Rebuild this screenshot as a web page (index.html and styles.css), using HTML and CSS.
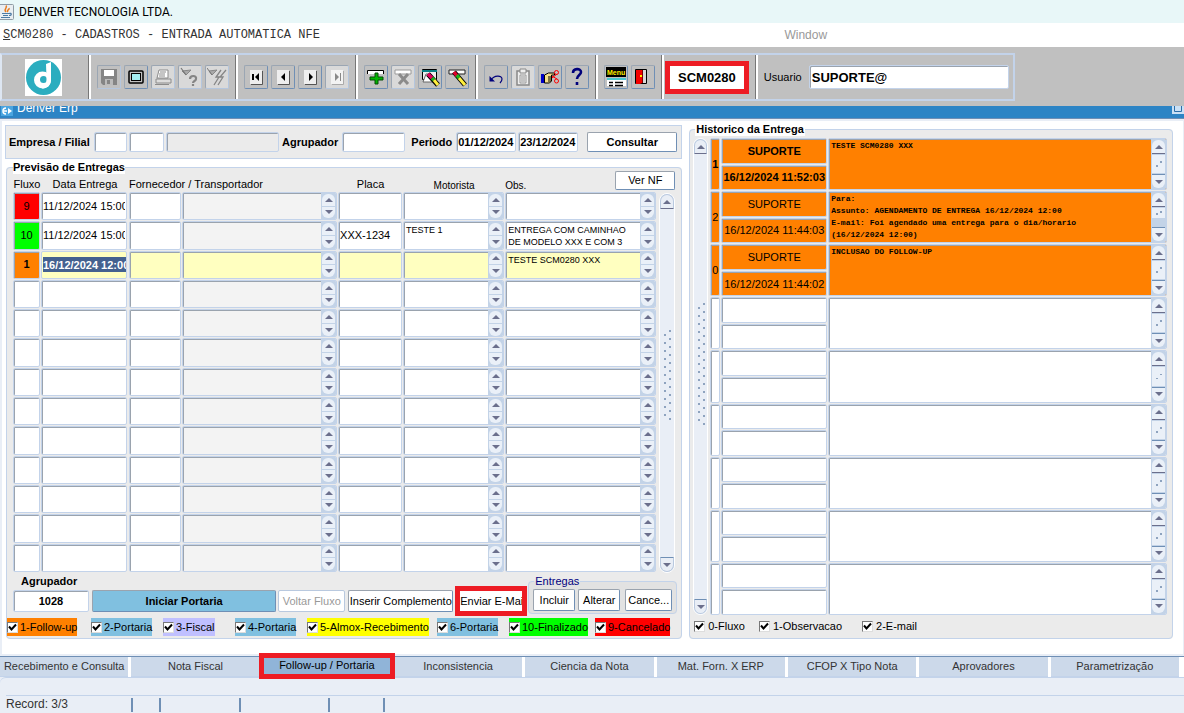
FILE: index.html
```
<!DOCTYPE html>
<html lang="pt-BR">
<head>
  <title>DENVER TECNOLOGIA LTDA.</title>
  <meta charset="UTF-8"/>
  <meta name="viewport" content="width=device-width,initial-scale=1"/>
  <link rel="stylesheet" href="styles.css">
</head>
<body>
<header class="app-title">
  <svg width="14" height="16" viewBox="0 0 14 16"><rect x="-2" y="0.5" width="15.5" height="15" rx="1" fill="#e9eef2" stroke="#8f9ba5"/><path d="M6 8C3 5 8 4 6 1.500M8 8c-2-2 2-2 1-4" fill="none" stroke="#e87c1e" stroke-width="1.500"/><path d="M2 9.500h7M3 11.500h5M1 13.500h9M9 9.500c3-1 3 2 0 2" fill="none" stroke="#4c7ba5" stroke-width="1.200"/></svg>
  <span>DENVER TECNOLOGIA LTDA.</span>
</header>
<nav class="menu">
  <a href="#" class="menu-program"><u>S</u>CM0280 - CADASTROS - ENTRADA AUTOMATICA NFE</a>
  <a href="#" class="menu-window">Window</a>
</nav>

<div class="toolbar-area">
  <div class="toolbar">
    <div class="tool-group logo">
      <svg width="37" height="37" viewBox="0 0 37 37"><path fill="#fff" d="M0 0h37v37H0z"/><circle cx="18.500" cy="18.500" r="17.500" fill="#2badbf"/><circle cx="17.500" cy="21" r="8.500" fill="#fff"/><circle cx="18.500" cy="20.500" r="3.500" fill="#2badbf"/><path d="M21 5l5-2v17c0 7-4 9.500-9 9.500l3-5c1.500-1 1.500-2 1.500-5z" fill="#fff"/></svg>
    </div>
    <div class="tool-group">
      <button type="button" class="tool off" aria-label="Salvar"><svg viewBox="0 0 20 20"><path fill="#858585" d="M2 2h16v16H4l-2-2z"/><path fill="#fff" d="M5 3h10v6H5z"/><path fill="#bbb" d="M6 12h8v6H6z"/><path fill="#858585" d="M8 13h3v4H8z"/></svg></button>
      <button type="button" class="tool" aria-label="Tela"><svg viewBox="0 0 20 20"><rect x="3" y="4" width="14" height="12" rx="1" fill="#c0c0c0" stroke="#000" stroke-width="1.500"/><rect x="5.500" y="6.500" width="9" height="7" fill="#a5eef2" stroke="#000"/></svg></button>
      <button type="button" class="tool off pale" aria-label="Imprimir"><svg viewBox="0 0 20 20"><path d="M6 3h9v8H4z" fill="#fff" stroke="#8b8b8b"/><path d="M7 5h6M6 7h6M6 9h6" stroke="#8b8b8b"/><path d="M3 12h15v4H3z" fill="#ddd" stroke="#8b8b8b"/><path d="M2 17.500h14" stroke="#8b8b8b"/></svg></button>
      <button type="button" class="tool off pale" aria-label="Entrar consulta"><svg viewBox="0 0 20 20"><path d="M2 4l9-1-5 5z" fill="#aaa" stroke="#888"/><path d="M1 1l5 7" stroke="#777" stroke-width="1.200"/><path d="M10 12c0-4 7-4 6 0 0 2-3 2-3 4M13 17v2" fill="none" stroke="#858585" stroke-width="2.200"/></svg></button>
      <button type="button" class="tool off pale" aria-label="Executar consulta"><svg viewBox="0 0 20 20"><path d="M2 4l8-1-5 5z" fill="#aaa" stroke="#888"/><path d="M0 1l5 7" stroke="#777"/><path d="M14 3L9 10h3l-5 8M19 3l-6 7h3l-5 8" fill="none" stroke="#858585" stroke-width="1.300"/></svg></button>
    </div>
    <div class="tool-group">
      <button type="button" class="tool" aria-label="Primeiro"><svg viewBox="0 0 20 20"><path fill="#eee" d="M4 3h12v14H4z"/><path d="M16.500 4v13.500H5" fill="none" stroke="#555"/><path d="M6 7h2v6H6zM13 6v8l-4-4z"/></svg></button>
      <button type="button" class="tool" aria-label="Anterior"><svg viewBox="0 0 20 20"><path fill="#eee" d="M4 3h12v14H4z"/><path d="M16.500 4v13.500H5" fill="none" stroke="#555"/><path d="M12 6v8l-4-4z"/></svg></button>
      <button type="button" class="tool" aria-label="Proximo"><svg viewBox="0 0 20 20"><path fill="#eee" d="M4 3h12v14H4z"/><path d="M16.500 4v13.500H5" fill="none" stroke="#555"/><path d="M9 6v8l4-4z"/></svg></button>
      <button type="button" class="tool off pale" aria-label="Ultimo"><svg viewBox="0 0 20 20"><path fill="#f3f3f3" d="M4 3h12v14H4z"/><path d="M16.500 4v13.500H5" fill="none" stroke="#aaa"/><path fill="#888" d="M8 6v8l4-4zM13 6h1v8h-1z"/></svg></button>
    </div>
    <div class="tool-group">
      <button type="button" class="tool" aria-label="Inserir"><svg viewBox="0 0 20 20"><path d="M2 3h15v4H2z" fill="#fff"/><path d="M1.500 7V3.500h16V7" fill="none" stroke="#000"/><path d="M9 6h3v4h5v3h-5v4H9v-4H4v-3h5z" fill="#00b400" stroke="#064d06"/></svg></button>
      <button type="button" class="tool off pale" aria-label="Remover"><svg viewBox="0 0 20 20"><path d="M2 3h16v4H2z" fill="#fff" stroke="#999"/><path d="M6 7l9 10M15 7L6 17" stroke="#8b8b8b" stroke-width="3"/></svg></button>
      <button type="button" class="tool" aria-label="Limpar bloco"><svg viewBox="0 0 20 20"><path d="M2.500 2.500h14v10h-14z" fill="#eee" stroke="#000"/><path d="M2 4h15" stroke="#087f85" stroke-width="2"/><path d="M3 15l3-8h5l5 8z" fill="#fff" stroke="#666"/><path d="M8 7l10 11" stroke="#000" stroke-width="5"/><path d="M8 7l4 4" stroke="#e3005b" stroke-width="3.500"/><path d="M12 11l2 2" stroke="#19b41b" stroke-width="3.500"/><path d="M14 13l4 5" stroke="#ffef3d" stroke-width="3"/></svg></button>
      <button type="button" class="tool" aria-label="Limpar registro"><svg viewBox="0 0 20 20"><path d="M2 3h16v4H2z" fill="#fff" stroke="#222"/><path d="M7 5l11 13" stroke="#000" stroke-width="5"/><path d="M7 5l3 4" stroke="#e3002b" stroke-width="3.500"/><path d="M10 8l2 3" stroke="#19b41b" stroke-width="3.500"/><path d="M12 11l6 7" stroke="#ffef3d" stroke-width="3"/></svg></button>
    </div>
    <div class="tool-group">
      <button type="button" class="tool" aria-label="Desfazer"><svg viewBox="0 0 20 20"><path d="M5 13c3-5 11-5 11-1 0 2-1 3-2 4" fill="none" stroke="#00007b" stroke-width="1.200"/><path d="M3.500 9v5.500H9z" fill="#00007b"/></svg></button>
      <button type="button" class="tool off pale" aria-label="Colar"><svg viewBox="0 0 20 20"><path d="M4 4h12v14H4z" fill="#eee" stroke="#888" stroke-width="1.500"/><path d="M7 2h6v4H7z" fill="#eee" stroke="#888"/><path d="M7 8h6v8H7zM8 10h4M8 12h4M8 14h4" fill="none" stroke="#999"/></svg></button>
      <button type="button" class="tool" aria-label="Editar"><svg viewBox="0 0 20 20"><path d="M1 7h3v9H1z" fill="#0000c6"/><path d="M4.500 8l4-2h6v2h-3v6l-2 2h-5z" fill="#f7e08a" stroke="#000"/><path d="M8 10h4M8 12h4M8 14h3" stroke="#000"/><circle cx="16.500" cy="5.500" r="2" fill="none" stroke="#f00"/><circle cx="16.500" cy="14" r="2" fill="none" stroke="#f00"/><path d="M12 9l5 3M12 11l5-4" stroke="#f00"/></svg></button>
      <button type="button" class="tool" aria-label="Ajuda"><svg viewBox="0 0 20 20"><path d="M6 6c0-5 8-5 8-1 0 3-4 3-4 7M10 15v3" fill="none" stroke="#00007b" stroke-width="2.600"/></svg></button>
    </div>
    <div class="tool-group">
      <button type="button" class="tool" aria-label="Menu"><svg viewBox="0 0 20 20"><path fill="#000" d="M0 0h20v10H0z"/><text x="1" y="8" class="menu-glyph">Menu</text><path fill="#fff" d="M1 11h19v8H1z"/><path fill="#49c8d0" d="M1 11h19v2H1z"/><path d="M3 15.500h4M9 15.500h8M3 18.500h4M9 18.500h8" stroke="#000" stroke-width="1.500"/></svg></button>
      <button type="button" class="tool" aria-label="Sair"><svg viewBox="0 0 20 20"><path d="M2.500 2.500h11v14h-11z" fill="#d8d8d8" stroke="#000"/><path d="M8 3h2v13H8z" fill="#780000"/><path d="M3 3h6v13l-2 1H3z" fill="#f20000"/><path fill="#ffef00" d="M7 8h2v2H7z"/></svg></button>
    </div>
    <div class="tool-group program">
      <output class="program-code">SCM0280</output>
    </div>
    <div class="tool-group user">
      <label for="usuario">Usuario</label>
      <input id="usuario" class="user-input" type="text" value="SUPORTE@">
    </div>
  </div>
</div>

<div class="window-title">
  <svg width="12" height="10" viewBox="0 0 12 10"><path fill="#4ba5e0" d="M0 0h12v10H0z"/><path d="M5 2a3 3 0 1 0 0 6M3 5h3" fill="none" stroke="#fff" stroke-width="1.500"/><path d="M7 2l4 3-4 3z" fill="#fff"/></svg>
  <span class="window-name">Denver Erp</span>
  <svg class="restore" width="12" height="8" viewBox="0 0 12 8"><path fill="#c9e0f5" d="M0 0h12v8H0z"/><path d="M2.500-1v6.500h7V-1" fill="none" stroke="#2b6ea8"/></svg>
</div>

<main class="content">
  <section class="left">
    <form class="filter">
      <label for="empresa">Empresa / Filial</label>
      <input id="empresa" class="field w-emp" type="text">
      <input class="field w-fil" type="text" aria-label="Filial">
      <input class="field w-name" type="text" aria-label="Nome da filial" readonly>
      <label for="agrupador">Agrupador</label>
      <input id="agrupador" class="field w-agr" type="text">
      <label for="periodo" class="period">Periodo</label>
      <input id="periodo" class="field w-date" type="text" value="01/12/2024">
      <input class="field w-date" type="text" aria-label="Periodo final" value="23/12/2024">
      <button type="button" class="btn consult">Consultar</button>
    </form>

    <fieldset class="panel">
      <legend>Previsão de Entregas</legend>
      <div class="deliveries-area">
        <table class="deliveries">
          <colgroup>
            <col class="c-flow"><col class="c-date"><col class="c-sup"><col class="c-carrier"><col class="c-plate"><col class="c-driver"><col class="c-obs">
          </colgroup>
          <thead>
            <tr>
              <th>Fluxo</th>
              <th>Data Entrega</th>
              <th colspan="2" class="start">Fornecedor / Transportador</th>
              <th>Placa</th>
              <th class="small">Motorista</th>
              <th class="small start">Obs.</th>
            </tr>
          </thead>
          <tbody id="deliveries"></tbody>
        </table>
        <button type="button" class="btn ver-nf">Ver NF</button>
        <div class="scroll">
          <button type="button" class="arrow up" aria-label="Subir"></button>
          <span class="grip"></span>
          <button type="button" class="arrow down" aria-label="Descer"></button>
        </div>
      </div>

      <div class="actions">
        <div class="group-id">
          <label for="grupo">Agrupador</label>
          <input id="grupo" class="field" type="text" value="1028">
        </div>
        <button type="button" class="btn start-btn">Iniciar Portaria</button>
        <button type="button" class="btn back-btn" disabled>Voltar Fluxo</button>
        <button type="button" class="btn insert-btn">Inserir Complemento</button>
        <button type="button" class="btn mail-btn">Enviar E-Mai</button>
        <fieldset class="entregas">
          <legend>Entregas</legend>
          <button type="button" class="btn">Incluir</button>
          <button type="button" class="btn">Alterar</button>
          <button type="button" class="btn cancel">Cance...</button>
        </fieldset>
      </div>

      <div class="flows">
        <label class="orange"><input type="checkbox" checked>1-Follow-up</label>
        <label class="blue"><input type="checkbox" checked>2-Portaria</label>
        <label class="lilac"><input type="checkbox" checked>3-Fiscal</label>
        <label class="blue"><input type="checkbox" checked>4-Portaria</label>
        <label class="yellow"><input type="checkbox" checked>5-Almox-Recebimento</label>
        <label class="blue"><input type="checkbox" checked>6-Portaria</label>
        <label class="green"><input type="checkbox" checked>10-Finalizado</label>
        <label class="red"><input type="checkbox" checked>9-Cancelado</label>
      </div>
    </fieldset>
  </section>

  <fieldset class="panel history">
    <legend>Historico da Entrega</legend>
    <div class="history-area">
      <div class="scroll">
        <button type="button" class="arrow up" aria-label="Subir"></button>
        <span class="grip tall"></span>
        <button type="button" class="arrow down" aria-label="Descer"></button>
      </div>
      <div id="history" class="history-list"></div>
    </div>
    <div class="kinds">
      <label><input type="checkbox" checked>0-Fluxo</label>
      <label><input type="checkbox" checked>1-Observacao</label>
      <label><input type="checkbox" checked>2-E-mail</label>
    </div>
  </fieldset>
</main>

<nav class="tabs">
  <button type="button">Recebimento e Consulta</button>
  <button type="button">Nota Fiscal</button>
  <button type="button" class="active">Follow-up / Portaria</button>
  <button type="button">Inconsistencia</button>
  <button type="button">Ciencia da Nota</button>
  <button type="button">Mat. Forn. X ERP</button>
  <button type="button">CFOP X Tipo Nota</button>
  <button type="button">Aprovadores</button>
  <button type="button">Parametrização</button>
</nav>

<footer class="status">
  <div class="status-message"></div>
  <div class="status-line">
    <span class="record">Record: 3/3</span>
    <span class="s1"></span>
    <span class="s2"></span>
    <span class="s3"></span>
    <span class="s4"></span>
  </div>
</footer>

<script src="app.js"></script>
</body>
</html>
```
FILE: styles.css
```
* {
  box-sizing: border-box;
}

body {
  display: flex;
  flex-direction: column;
  min-height: 100vh;
  margin: 0;
  font: 11px/13px "Liberation Sans", Arial, sans-serif;
  color: #000;
  background: #e9eef6;
}

button, input, textarea {
  margin: 0;
  font: inherit;
  color: inherit;
}

/* title and menu */
.app-title {
  display: flex;
  align-items: center;
  gap: 5px;
  height: 23px;
  font: 12px/16px Roboto, sans-serif;
  background: #e8f7f8;
}

.menu {
  display: flex;
  align-items: center;
  height: 24px;
  padding-left: 3px;
  background: #fff;
}

.menu a {
  color: #333;
  text-decoration: none;
}

.menu-program {
  flex: 0 0 66%;
  font: 12px/14px "Liberation Mono", monospace;
}

.menu .menu-window {
  padding-left: 2px;
  font-size: 12px;
  color: #999;
}

/* toolbar */
.toolbar-area {
  height: 59px;
  padding-top: 6px;
  background: #c0c0c0;
}

.toolbar {
  display: flex;
  width: max-content;
  height: 48px;
  border: 2px solid #c3d3ea;
  border-left-color: #dde6f2;
}

.tool-group {
  display: flex;
  align-items: center;
  gap: 3px;
  padding: 0 6px;
  border-left: 2px solid #fff;
  border-right: 1px solid #777;
}

.logo {
  padding: 0 26px 0 23px;
  border-left: 0;
}

.tool {
  width: 24px;
  height: 24px;
  padding: 1px;
  background: #c0c0c0;
  border: 1px solid #9ba6b3;
  border-right-color: #6f8fb5;
  border-bottom-color: #6f8fb5;
  border-radius: 2px;
}

.tool.off {
  border-right-color: #b4c6de;
  border-bottom-color: #b4c6de;
}

.tool.pale {
  background: #d9d9d9;
}

.tool svg {
  display: block;
  width: 20px;
  height: 20px;
}

.menu-glyph {
  font: bold 7px "Liberation Sans", sans-serif;
  fill: #ffef00;
}

.program {
  padding: 0 6px 0 1px;
}

.program-code {
  padding: 5px 8px;
  font-size: 13px;
  font-weight: bold;
  background: #fff;
  border: 5px solid #ed1c24;
}

.user {
  gap: 7px;
  padding: 0 4px 0 6px;
  border-right: 0;
}

.user-input {
  width: 200px;
  height: 24px;
  padding: 0 2px;
  font-size: 13px;
  font-weight: bold;
  background: #fff;
  border: 1px solid #c3d3ea;
  border-radius: 2px;
  box-shadow: inset 1px 1px #9aa3ae;
}

.window-title {
  display: flex;
  align-items: flex-start;
  gap: 4px;
  height: 13px;
  padding-left: 1px;
  overflow: hidden;
  color: #fff;
  background: #2c84c5;
  border-bottom: 1px solid #6f8fb5;
}

.window-name {
  margin-top: -4px;
  font-size: 12px;
}

.restore {
  margin-left: auto;
}

/* content */
.content {
  display: grid;
  flex: 1;
  grid-template-columns: 7fr 5fr;
  gap: 7px;
  padding: 2px 10px 15px 3px;
  background: #fff;
  border: 2px solid #e9eef6;
  border-right-width: 1px;
}

.left {
  display: flex;
  flex-direction: column;
  gap: 2px;
  min-width: 0;
  padding-top: 2px;
}

.filter {
  display: flex;
  align-items: center;
  gap: 2px;
  height: 34px;
  padding: 0 4px 0 2px;
  font-weight: bold;
  background: #ebebeb;
  border: 1px solid #c3d3ea;
}

.filter label {
  flex: none;
  padding: 0 2px 0 1px;
}

.filter .period {
  padding-left: 4px;
}

.field {
  min-width: 0;
  height: 20px;
  padding: 0 1px;
  font-weight: bold;
  background: #fff;
  border: 1px solid #c3d3ea;
  border-radius: 2px;
  box-shadow: inset 1px 1px #9aa3ae;
}

.field:read-only {
  background: #ebebeb;
}

.w-emp {
  width: 33px;
}

.w-fil {
  width: 35px;
}

.w-name {
  flex: 1;
}

.w-agr {
  width: 63px;
}

.w-date {
  width: 60px;
}

.btn {
  height: 22px;
  padding: 0;
  white-space: nowrap;
  background: #fff;
  border: 1px solid #9aa3ae;
  border-right-color: #6f8fb5;
  border-bottom-color: #6f8fb5;
  border-radius: 2px;
}

.consult {
  width: 90px;
  height: 20px;
  margin-left: 7px;
  font-weight: bold;
}

.panel {
  display: flex;
  flex: 1;
  flex-direction: column;
  min-width: 0;
  margin: 0 0 0 1px;
  padding: 0;
  background: #ebebeb;
  border: 1px solid #c3d3ea;
  border-radius: 4px;
}

.panel > legend {
  margin-left: 6px;
  padding: 0;
  font-weight: bold;
  background: #fff;
}

.deliveries-area {
  display: grid;
  grid-template-columns: 1fr 16px;
  grid-template-rows: 19px 1fr;
  column-gap: 2px;
  padding: 0 6px;
}

.deliveries {
  grid-area: 1 / 1 / 3 / 2;
  width: 100%;
  height: 396px;
  margin-top: 3px;
  table-layout: fixed;
  border-collapse: collapse;
}

.c-flow {
  width: 28px;
}

.c-date {
  width: 88px;
}

.c-sup {
  width: 53px;
}

.c-carrier {
  width: 156px;
}

.c-plate {
  width: 65px;
}

.c-driver {
  width: 102px;
}

.c-obs {
  width: 152px;
}

.deliveries th {
  height: 15px;
  padding: 0;
  font-weight: normal;
  white-space: nowrap;
}

.deliveries .start {
  text-align: left;
}

.deliveries .small {
  padding-top: 2px;
  font-size: 10px;
}

.deliveries td {
  height: 29px;
  padding: 0 1px 1px 0;
}

.deliveries td:nth-child(2) {
  padding-right: 2px;
}

.ver-nf {
  grid-area: 1 / 1 / 2 / 3;
  justify-self: end;
  width: 60px;
  height: 19px;
  margin-top: -3px;
}

.deliveries-area .scroll {
  grid-area: 2 / 2;
}

/* record cells */
.cell {
  display: flex;
  width: 100%;
  height: 100%;
  overflow: hidden;
  background: #fff;
  border: 1px solid #c3d3ea;
  border-radius: 2px;
}

.cell input, .cell textarea {
  flex: 1;
  width: 100%;
  min-width: 0;
  padding: 0 1px;
  resize: none;
  overflow: hidden;
  background: transparent;
  border: 0;
  outline: 0;
  box-shadow: inset 1px 1px #9aa3ae;
}

.cell textarea {
  padding: 2px 0 0 2px;
  font-size: 9px;
  line-height: 12px;
}

.cell.center input {
  padding: 0;
  text-align: center;
}

.cell.readonly {
  background: #f3f3f3;
}

.current .cell {
  background: #ffffc0;
}

.cell.red, .red {
  background: #f00;
}

.cell.green, .green {
  background: #0f0;
}

.cell.orange, .current .cell.orange, .orange {
  background: #ff8000;
}

.current .center, .current .date {
  font-weight: bold;
}

.current .date input {
  height: 15px;
  margin: auto 0 auto 1px;
  padding: 0;
  color: #fff;
  background: #44618f;
  box-shadow: none;
}

.spin {
  display: flex;
  flex: none;
  flex-direction: column;
  gap: 1px;
  width: 15px;
  padding: 1px;
  background: #c3d3e7;
}

.spin button {
  display: grid;
  flex: 1;
  place-items: center;
  padding: 0;
  background: #eaf0f8;
  border: 0;
  border-radius: 6px 6px 0 0;
}

.spin button:last-child {
  border-radius: 0 0 6px 6px;
}

.spin button::before, .arrow::before {
  content: "";
  border: 4px solid transparent;
  border-top: 0;
  border-bottom: 4px solid #6b6f8c;
}

.spin button:last-child::before, .arrow.down::before {
  border-top: 4px solid #6b6f8c;
  border-bottom: 0;
}

/* scrollbars */
.scroll {
  display: flex;
  flex-direction: column;
  align-items: center;
  background: #e9eef6;
  border: 1px solid #fff;
  border-radius: 8px;
}

.arrow {
  display: grid;
  place-items: center;
  width: 100%;
  height: 15px;
  padding: 0;
  background: #e9eef6;
  border: 1px solid #b9c9df;
  border-bottom-color: #6b6f8c;
  border-radius: 7px 7px 0 0;
}

.arrow.down {
  border-color: #b9c9df;
  border-top-color: #6f8fb5;
  border-radius: 0 0 7px 7px;
}

.grip {
  width: 8px;
  height: 92px;
  margin: 120px auto auto;
  background:
    radial-gradient(circle at 2px 6px, #8ea3bf 1px, transparent 1px) 0 0 / 8px 8px,
    radial-gradient(circle at 7px 2px, #8ea3bf 1px, transparent 1px) 0 0 / 8px 8px;
}

.grip.tall {
  height: 124px;
  margin-top: 148px;
}

/* actions */
.actions {
  display: flex;
  align-items: flex-end;
  height: 41px;
  padding: 0 4px 0 6px;
}

.actions .btn {
  flex: none;
  margin-bottom: 2px;
}

.group-id {
  display: flex;
  flex-direction: column;
  gap: 2px;
  width: 76px;
  margin: 0 3px 2px 0;
  font-weight: bold;
}

.group-id label {
  padding-left: 8px;
}

.group-id .field {
  height: 22px;
  text-align: center;
}

.actions .start-btn {
  flex: 1;
  margin-right: 2px;
  font-weight: bold;
  background: #80c0e0;
}

.back-btn {
  width: 67px;
  color: #999;
  border-color: #b9c9df;
}

.insert-btn {
  width: 105px;
  margin-left: 3px;
}

.actions .mail-btn {
  width: 62px;
  height: 20px;
  margin: 0 6px 3px 7px;
  border: 0;
  border-radius: 0;
  outline: 5px solid #ed1c24;
}

.entregas {
  display: flex;
  gap: 3px;
  width: 149px;
  min-width: 0;
  margin: 0;
  padding: 0 4px;
  background: #e2e2e2;
  border: 1px solid #c3d3ea;
  border-radius: 4px;
}

.entregas legend {
  margin-left: 1px;
  padding: 0 1px;
  color: #000080;
}

.entregas .btn {
  flex: 1;
  margin-top: 1px;
}

.entregas .cancel {
  flex: 0 0 47px;
  margin-left: 2px;
}

/* checkboxes */
.flows {
  display: grid;
  grid-template-columns: 84px 72px 72px 72px 130px 72px 86px 1fr;
  justify-items: start;
  padding: 4px 0 2px;
}

.flows label, .kinds label {
  display: flex;
  align-items: center;
  gap: 3px;
  height: 18px;
  white-space: nowrap;
}

.flows label {
  gap: 2px;
}

.blue {
  background: #80c0e0;
}

.lilac {
  background: #c0c0ff;
}

.yellow {
  background: #ff0;
}

input[type="checkbox"] {
  width: 11px;
  height: 11px;
  appearance: none;
  background: #fff url("data:image/svg+xml,%3Csvg xmlns='http://www.w3.org/2000/svg' viewBox='0 0 9 9'%3E%3Cpath d='M1 3.500l2.500 3L8 1.500' fill='none' stroke='%23000' stroke-width='2'/%3E%3C/svg%3E") center / 9px 9px no-repeat;
  border: 1px solid #777;
  border-right-color: #ddd;
  border-bottom-color: #ddd;
}

/* history */
.history > legend {
  margin-left: 5px;
  padding: 0 1px;
}

.history {
  margin-left: 0;
}

.history-area {
  display: flex;
  flex: 1;
  gap: 2px;
  padding: 2px 5px 0 3px;
}

.history-area .scroll {
  flex: 0 0 15px;
}

.history-list {
  display: flex;
  flex: 1;
  flex-direction: column;
  gap: 1px;
  min-width: 0;
}

.record-row {
  display: grid;
  flex: 1;
  grid-template-rows: 1fr 1fr;
  grid-template-columns: 10px 106px 1fr;
  gap: 1px;
  min-height: 0;
}

.record-row .seq {
  grid-row: 1 / 3;
}

.record-row .note {
  grid-area: 1 / 3 / 3 / 4;
}

.record-row .note textarea {
  height: 100%;
  padding: 1px 0 0 2px;
  font: bold 8px/12px "Liberation Mono", monospace;
}

.record-row.latest .center {
  font-weight: bold;
}

.record-row .cell input {
  height: 100%;
}

.spin.long button {
  flex: 0 0 14px;
  border-bottom: 1px solid #6b6f8c;
}

.spin.long button:last-child {
  margin-top: auto;
  border-top: 1px solid #6f8fb5;
  border-bottom: 0;
}

.thumb {
  flex: 1;
  background:
    radial-gradient(circle at 5px 60%, #8ea3bf 1px, transparent 1px),
    radial-gradient(circle at 9px 40%, #8ea3bf 1px, transparent 1px),
    #eaf0f8;
}

.thumb.short {
  flex: 0 0 10px;
}

.kinds {
  display: flex;
  gap: 14px;
  padding: 2px 4px 3px;
}

.kinds label:last-child {
  margin-left: 6px;
}

/* tabs */
.tabs {
  display: flex;
  gap: 3px;
  padding-right: 5px;
  background: #fff;
  border-top: 1px solid #6f8fb5;
}

.tabs button {
  flex: 1;
  height: 20px;
  padding: 0;
  color: #333;
  background: #ccd9ea;
  border: 0;
  border-bottom: 1px solid #c3d3ea;
}

.tabs .active {
  z-index: 1;
  height: 18px;
  color: #000;
  background: #90b4d8;
  outline: 5px solid #ed1c24;
  outline-offset: -1px;
}

/* status bar */
.status {
  height: 37px;
  padding: 0 0 0 6px;
  font-size: 12px;
  color: #333;
  border-top: 1px solid #c3d3ea;
  border-radius: 6px 0 0 0;
}

.status-message {
  height: 18px;
  border-bottom: 1px solid #c3d3ea;
}

.status-line {
  display: flex;
  align-items: center;
  height: 18px;
}

.status-line span {
  height: 14px;
  border-right: 2px solid #6f8fb5;
}

.status-line .record {
  width: 127px;
}

.s1 {
  width: 28px;
}

.s2 {
  width: 80px;
}

.s3 {
  width: 89px;
}

.s4 {
  width: 55px;
}
```
FILE: app.js
```
const deliveries = [
  { flow: "9", color: "red", date: "11/12/2024 15:00" },
  { flow: "10", color: "green", date: "11/12/2024 15:00", plate: "XXX-1234", driver: "TESTE 1", obs: "ENTREGA COM CAMINHAO DE MODELO XXX E COM 3" },
  { flow: "1", color: "orange", date: "16/12/2024 12:00", obs: "TESTE SCM0280 XXX", current: true }
];

const history = [
  { seq: "1", user: "SUPORTE", date: "16/12/2024 11:52:03", note: "TESTE SCM0280 XXX", latest: true },
  { seq: "2", user: "SUPORTE", date: "16/12/2024 11:44:03", note: "Para:\nAssunto: AGENDAMENTO DE ENTREGA 16/12/2024 12:00\nE-mail: Foi agendado uma entrega para o dia/horario\n(16/12/2024 12:00)", long: true },
  { seq: "0", user: "SUPORTE", date: "16/12/2024 11:44:02", note: "INCLUSAO DO FOLLOW-UP" }
];

const input = (label, value = "", cls = "") =>
  `<div class="cell ${cls}"><input type="text" aria-label="${label}" value="${value}"></div>`;

const spin = `<span class="spin"><button type="button" aria-label="Subir"></button><button type="button" aria-label="Descer"></button></span>`;

const area = (label, value = "", cls = "") =>
  `<div class="cell ${cls}"><textarea aria-label="${label}">${value}</textarea>${spin}</div>`;

let rows = "";
for (let i = 0; i < 13; i++) {
  const d = deliveries[i] || {};
  rows += `<tr class="${d.current ? "current" : ""}">
    <td>${input("Fluxo", d.flow, "center " + (d.color || ""))}</td>
    <td>${input("Data Entrega", d.date, "date")}</td>
    <td>${input("Fornecedor")}</td>
    <td>${area("Transportador", "", "readonly")}</td>
    <td>${input("Placa", d.plate)}</td>
    <td>${area("Motorista", d.driver)}</td>
    <td>${area("Obs.", d.obs)}</td>
  </tr>`;
}
document.getElementById("deliveries").innerHTML = rows;

let records = "";
for (let i = 0; i < 9; i++) {
  const h = history[i] || {};
  const color = h.seq ? "orange" : "";
  records += `<div class="record-row ${h.latest ? "latest" : ""}">
    ${input("Tipo", h.seq, "seq center " + color)}
    ${input("Usuario", h.user, "center " + color)}
    ${input("Data", h.date, "center " + color)}
    <div class="cell note ${color}">
      <textarea aria-label="Historico">${h.note || ""}</textarea>
      <span class="spin long">
        <button type="button" aria-label="Subir"></button>
        <span class="thumb ${h.long ? "short" : ""}"></span>
        <button type="button" aria-label="Descer"></button>
      </span>
    </div>
  </div>`;
}
document.getElementById("history").innerHTML = records;
```
